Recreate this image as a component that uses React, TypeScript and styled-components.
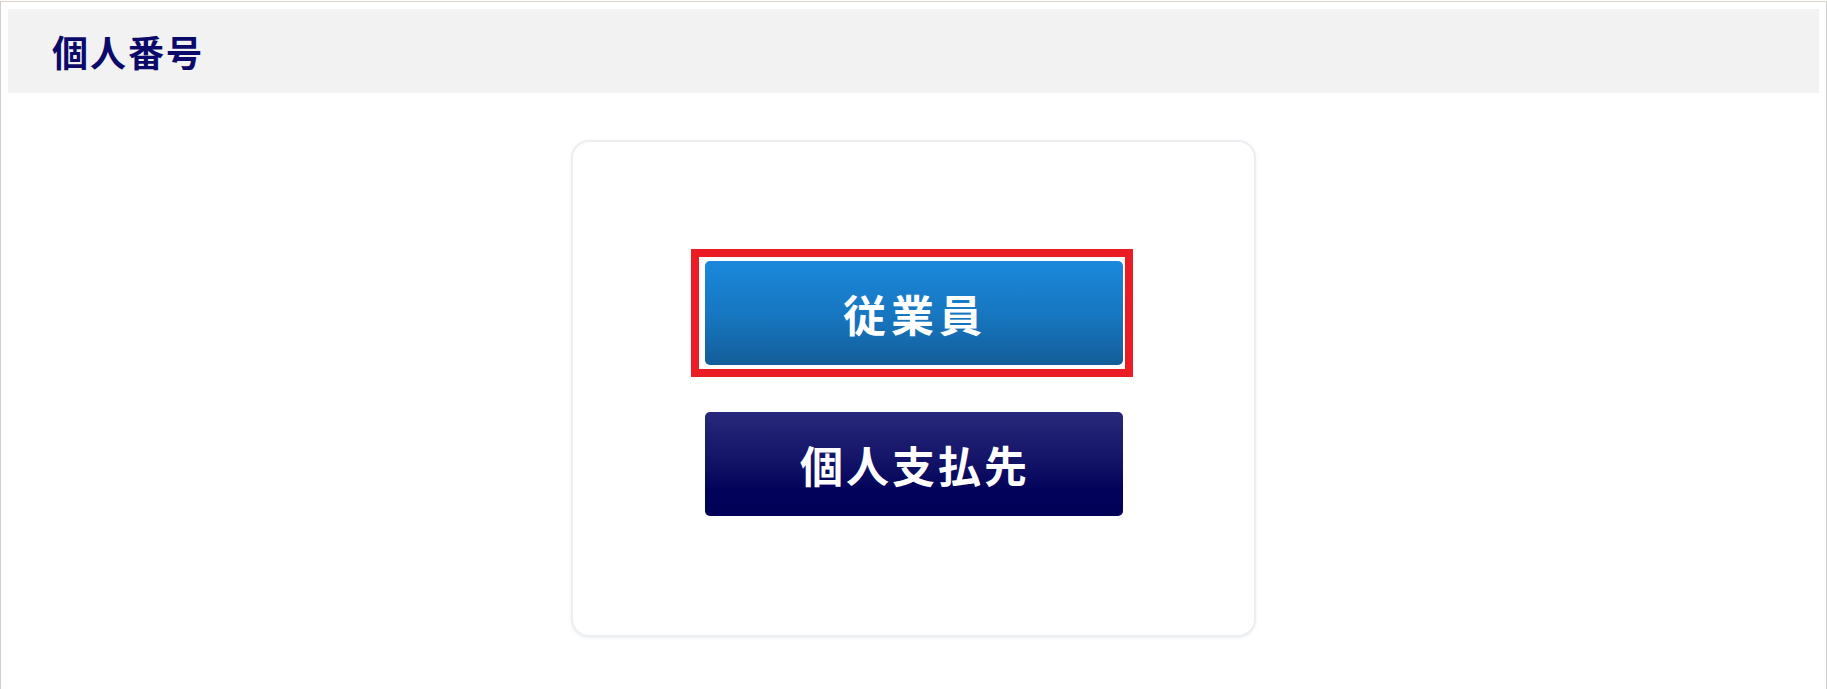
import React from 'react'
import styled, { createGlobalStyle } from 'styled-components'

const GlobalStyle = createGlobalStyle`
  html, body {
    margin: 0;
    padding: 0;
    background: #ffffff;
  }
  body {
    font-family: "Noto Sans CJK JP", "Noto Sans", sans-serif;
  }
`

const Frame = styled.div`
  margin-top: 1px;
  min-height: 700px;
  border-top: 1px solid #ddd5c9;
  border-left: 1px solid #cfcfcf;
  border-right: 1px solid #cfcfcf;
  padding: 7px 7px 0;
  box-sizing: border-box;
`

const TitleBar = styled.div`
  height: 84px;
  background: #f2f2f2;
  display: flex;
  align-items: center;
  padding-left: 44px;
`

const Title = styled.h1`
  margin: 0;
  font-size: 36px;
  font-weight: 700;
  letter-spacing: 2px;
  color: #0b0a6b;
  line-height: 1;
`

const Card = styled.div`
  width: 685px;
  box-sizing: border-box;
  margin: 47px auto 0;
  padding: 119px 0;
  border: 2px solid #eceef2;
  border-radius: 18px;
  box-shadow: 0 1px 3px rgba(200, 206, 216, 0.35);
  background: #ffffff;
  display: flex;
  flex-direction: column;
  align-items: center;
  gap: 47px;
`

const ChoiceButton = styled.button<{ variant: 'blue' | 'navy'; highlighted?: boolean }>`
  position: relative;
  width: 418px;
  height: 104px;
  border: none;
  border-radius: 5px;
  padding: 0 0 0 3px;
  cursor: pointer;
  display: flex;
  align-items: center;
  justify-content: center;
  font-family: "Noto Sans CJK JP", "Noto Sans", sans-serif;
  font-size: 43px;
  font-weight: 700;
  letter-spacing: ${({ variant }) => (variant === 'blue' ? '5px' : '3px')};
  color: #ffffff;
  line-height: 1;
  background: ${({ variant }) =>
    variant === 'blue'
      ? 'linear-gradient(to bottom, #1a88db 0%, #1777c2 50%, #135d99 100%)'
      : 'linear-gradient(to bottom, #28297b 0%, #141468 45%, #02025a 75%, #010158 100%)'};

  &::after {
    content: '';
    display: ${({ highlighted }) => (highlighted ? 'block' : 'none')};
    position: absolute;
    top: -12px;
    bottom: -12px;
    left: -14px;
    right: -10px;
    border: 8px solid #ec1c24;
    pointer-events: none;
  }
`

export default function App() {
  return (
    <>
      <GlobalStyle />
      <Frame>
        <TitleBar>
          <Title>個人番号</Title>
        </TitleBar>
        <Card>
          <ChoiceButton variant="blue" highlighted>
            従業員
          </ChoiceButton>
          <ChoiceButton variant="navy">個人支払先</ChoiceButton>
        </Card>
      </Frame>
    </>
  )
}
